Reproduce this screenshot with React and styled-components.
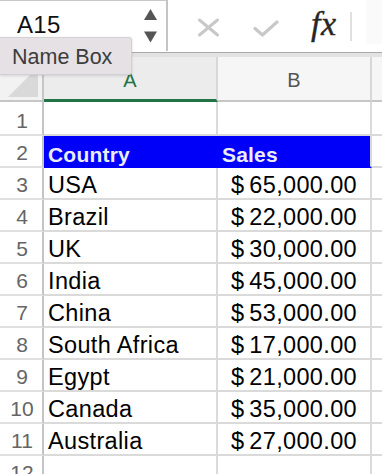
import React from "react";
import styled, { createGlobalStyle } from "styled-components";

const Global = createGlobalStyle`
  html, body { margin: 0; padding: 0; background: #fff; overflow: hidden; }
  body { font-family: "Liberation Sans", Arial, Helvetica, sans-serif; }
  * { box-sizing: border-box; }
`;

const Page = styled.div`
  position: relative;
  width: 382px;
  height: 474px;
  overflow: hidden;
  background: #fff;
`;

const TopBar = styled.div`
  display: flex;
  align-items: stretch;
  height: 52px;
  background: #fff;
`;

const NameBox = styled.div`
  display: flex;
  align-items: center;
  justify-content: space-between;
  width: 168px;
  height: 51px;
  border-top: 1px solid #c8c8c8;
  border-right: 2px solid #c4c4c4;
  padding: 0 9px 2px 17px;
`;

const NameValue = styled.span`
  font-size: 24px;
  line-height: 1;
  color: #111;
  letter-spacing: 0.3px;
`;

const Tools = styled.div`
  display: flex;
  align-items: center;
  gap: 33px;
  padding-left: 29px;
`;

const Fx = styled.span`
  font-family: "Liberation Serif", "Times New Roman", serif;
  font-style: italic;
  font-size: 34px;
  line-height: 1;
  color: #262626;
  letter-spacing: 0.5px;
  margin: -5px 0 0 -1px;
  -webkit-text-stroke: 0.4px #262626;
`;

const Sep = styled.div`
  width: 2px;
  height: 29px;
  background: #e0e0e0;
  margin: 12px 0 0 13px;
`;

const FormulaInput = styled.div`
  flex: 1;
  margin: 0 0 8px 14px;
  background: #fafafa;
`;

const BarDivider = styled.div`
  height: 5px;
  border-top: 1px solid #a9a9a9;
  background: #e2e2e2;
`;

const Tooltip = styled.div`
  position: absolute;
  left: 0;
  top: 37px;
  width: 132px;
  height: 38px;
  display: flex;
  align-items: center;
  padding: 2px 0 0 12px;
  background: #e5e1e5;
  border: 1px solid #d3cfd3;
  border-left: none;
  border-radius: 0 3px 3px 0;
  box-shadow: 0 1px 3px rgba(0, 0, 0, 0.12);
  font-size: 21.5px;
  color: #3c3c3c;
  z-index: 2;
`;

const Sheet = styled.div`
  display: grid;
  grid-template-columns: 44px 174px 154px 1fr;
  grid-template-rows: 45px 34px repeat(11, 32px);
`;

const Corner = styled.div`
  background: #f2f2f2;
  border-right: 2px solid #c6c6c6;
  border-bottom: 2px solid #c6c6c6;
  display: flex;
  align-items: flex-end;
  justify-content: flex-end;
  padding: 0 4px 3px 0;
`;

const ColHeader = styled.div`
  display: flex;
  align-items: center;
  justify-content: center;
  padding-top: ${(p) => (p.$selected ? "4px" : "3px")};
  background: ${(p) => (p.$selected ? "#ececec" : "#f6f6f6")};
  border-right: ${(p) => (p.$last ? "none" : "2px solid #d8d8d8")};
  border-bottom: ${(p) => (p.$selected ? "3px solid #227447" : "2px solid #c6c6c6")};
  color: ${(p) => (p.$selected ? "#227447" : "#555")};
  font-size: 20px;
  line-height: 1;
`;

const RowHeader = styled.div`
  display: flex;
  align-items: flex-end;
  justify-content: center;
  padding: 0 0 3px 2px;
  background: #fff;
  border-right: 2px solid #c4c4c4;
  border-bottom: 2px solid #e0e0e0;
  color: #656565;
  font-size: 21px;
  line-height: 1;
`;

const Cell = styled.div`
  display: flex;
  align-items: flex-end;
  justify-content: ${(p) => (p.$money ? "space-between" : "flex-start")};
  padding: ${(p) => (p.$money ? "0 13px 1px 13px" : "0 0 1px 4px")};
  background: ${(p) => (p.$fill ? "#0000fa" : "#fff")};
  border-right: ${(p) =>
    p.$last ? "none" : `2px solid ${p.$fillRight ? "#0000fa" : "#dadada"}`};
  border-bottom: 2px solid ${(p) => (p.$fill ? "#0000fa" : "#dadada")};
  color: ${(p) => (p.$fill ? "#ececf7" : "#000")};
  font-size: ${(p) => (p.$fill ? "21px" : "23.5px")};
  font-weight: ${(p) => (p.$fill ? 700 : 400)};
  letter-spacing: ${(p) => (p.$fill ? "0.2px" : "0.35px")};
  line-height: 1;
  white-space: nowrap;
  overflow: hidden;
`;

const SpinnerIcon = () => (
  <svg width="13" height="34" viewBox="0 0 13 34" style={{ marginTop: 1 }}>
    <polygon points="0,11 13,11 6.5,0" fill="#555" />
    <polygon points="0,22.5 13,22.5 6.5,33.5" fill="#555" />
  </svg>
);

const CancelIcon = () => (
  <svg width="23" height="19" viewBox="0 0 23 19" style={{ marginTop: 2 }}>
    <path d="M2.5 2 L20.5 17 M20.5 2 L2.5 17" stroke="#c8c8c8" strokeWidth="3" strokeLinecap="round" />
  </svg>
);

const CheckIcon = () => (
  <svg width="26" height="17" viewBox="0 0 26 17" style={{ marginTop: 4 }}>
    <path d="M2 8.5 L9.5 15 L24 2" stroke="#c8c8c8" strokeWidth="3.2" fill="none" strokeLinecap="round" strokeLinejoin="round" />
  </svg>
);

const CornerTriangle = () => (
  <svg width="30" height="30" viewBox="0 0 30 30">
    <polygon points="0,30 30,30 30,0" fill="#d9d9d9" />
  </svg>
);

const data = [
  ["USA", "65,000.00"],
  ["Brazil", "22,000.00"],
  ["UK", "30,000.00"],
  ["India", "45,000.00"],
  ["China", "53,000.00"],
  ["South Africa", "17,000.00"],
  ["Egypt", "21,000.00"],
  ["Canada", "35,000.00"],
  ["Australia", "27,000.00"],
];

export default function App() {
  return (
    <Page>
      <Global />
      <TopBar>
        <NameBox>
          <NameValue>A15</NameValue>
          <SpinnerIcon />
        </NameBox>
        <Tools>
          <CancelIcon />
          <CheckIcon />
          <Fx>fx</Fx>
        </Tools>
        <Sep />
        <FormulaInput />
      </TopBar>
      <BarDivider />
      <Tooltip>Name Box</Tooltip>
      <Sheet>
        <Corner>
          <CornerTriangle />
        </Corner>
        <ColHeader $selected>A</ColHeader>
        <ColHeader>B</ColHeader>
        <ColHeader $last />

        <RowHeader>1</RowHeader>
        <Cell />
        <Cell />
        <Cell $last />

        <RowHeader>2</RowHeader>
        <Cell $fill $fillRight>Country</Cell>
        <Cell $fill>Sales</Cell>
        <Cell $last />

        {data.map(([country, amount], i) => (
          <React.Fragment key={country}>
            <RowHeader>{i + 3}</RowHeader>
            <Cell>{country}</Cell>
            <Cell $money>
              <span>$</span>
              <span>{amount}</span>
            </Cell>
            <Cell $last />
          </React.Fragment>
        ))}

        <RowHeader>12</RowHeader>
        <Cell />
        <Cell />
        <Cell $last />
      </Sheet>
    </Page>
  );
}
